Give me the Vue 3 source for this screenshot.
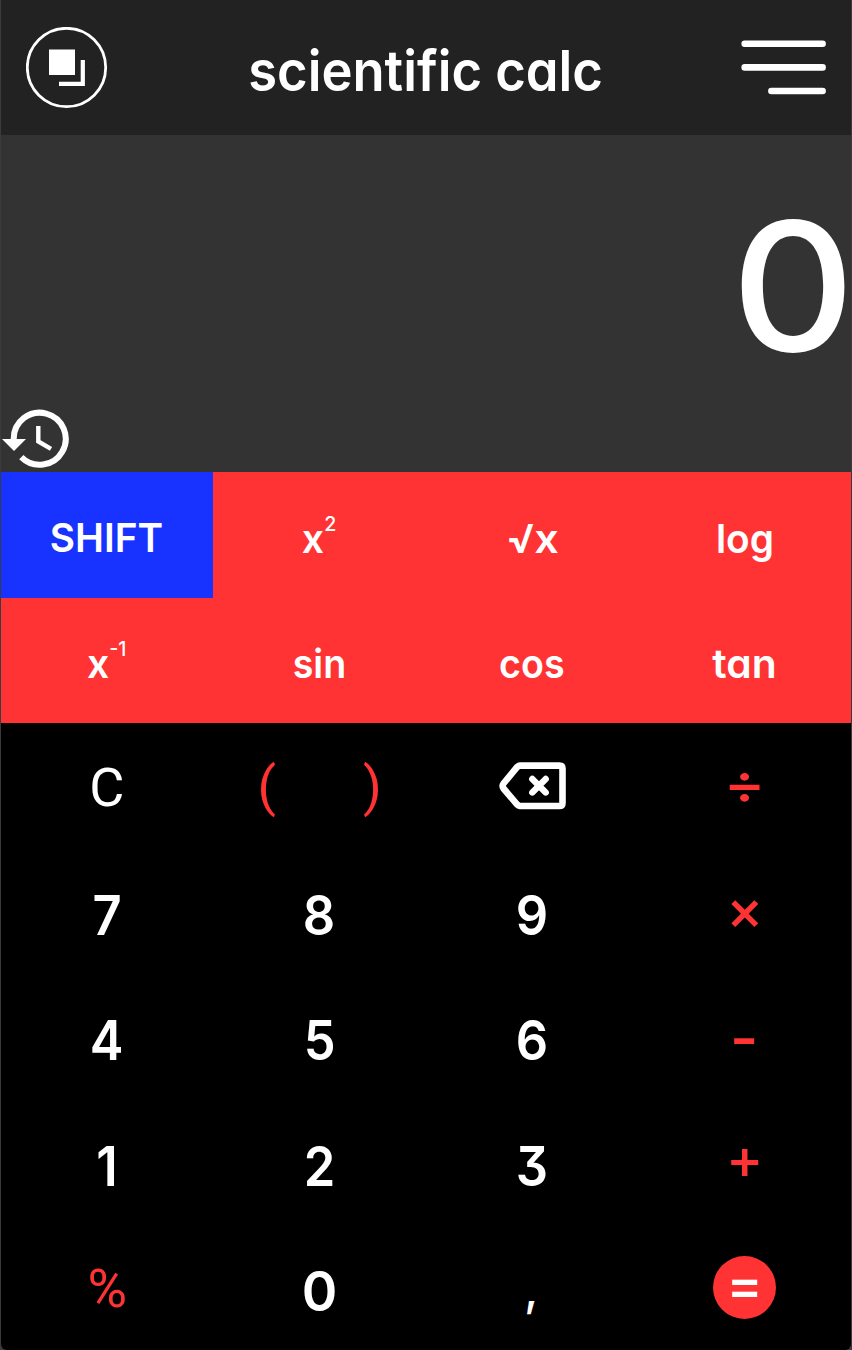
<script setup>
const functions = [
  { id: 'shift', text: 'SHIFT' },
  { id: 'square', text: 'x', sup: '2' },
  { id: 'root', text: '√x' },
  { id: 'log', text: 'log' },
  { id: 'inverse', text: 'x', sup: '-1' },
  { id: 'sin', text: 'sin' },
  { id: 'cos', text: 'cos' },
  { id: 'tan', text: 'tan' },
]

const keys = [
  { id: 'clear', text: 'C' },
  { id: 'parens', pair: ['(', ')'] },
  { id: 'backspace', icon: true },
  { id: 'divide', text: '÷', op: true },
  { id: 'n7', text: '7' },
  { id: 'n8', text: '8' },
  { id: 'n9', text: '9' },
  { id: 'times', text: '×', op: true },
  { id: 'n4', text: '4' },
  { id: 'n5', text: '5' },
  { id: 'n6', text: '6' },
  { id: 'minus', text: '-', op: true },
  { id: 'n1', text: '1' },
  { id: 'n2', text: '2' },
  { id: 'n3', text: '3' },
  { id: 'plus', text: '+', op: true },
  { id: 'percent', text: '%', op: true },
  { id: 'n0', text: '0' },
  { id: 'comma', text: ',' },
  { id: 'equals', text: '=' },
]
</script>

<template>
  <main class="window">
    <div class="calculator">
      <header class="bar">
        <svg class="float-icon" viewBox="0 0 82 82">
          <circle cx="40.5" cy="40.5" r="39.2" fill="none" stroke="#fff" stroke-width="2.8" />
          <rect x="23" y="22.5" width="26" height="25.5" fill="#fff" />
          <path d="M56.8 33V56.8H33" fill="none" stroke="#fff" stroke-width="4.2" />
        </svg>
        <h1 class="title"><span class="title-text">scientific calc</span></h1>
        <svg class="menu-icon" viewBox="0 0 86 56">
          <path d="M3.7 3.7H81.6M3.7 27.4H81.6M30.4 51H81.6" stroke="#fff" stroke-width="6.6" stroke-linecap="round" />
        </svg>
      </header>

      <section class="display">
        <span class="value">0</span>
        <svg class="history" viewBox="0 0 70 60">
          <path d="M12.7 30A26 26 0 1 1 20.3 48.1" fill="none" stroke="#fff" stroke-width="6" />
          <path d="M1 30H25L13 42Z" fill="#fff" />
          <path d="M37.3 17V32.4L50 39.8" fill="none" stroke="#fff" stroke-width="4.4" />
        </svg>
      </section>

      <section class="functions">
        <button v-for="f in functions" :key="f.id" class="fn" :class="f.id">
          <span class="label">{{ f.text }}<sup v-if="f.sup">{{ f.sup }}</sup></span>
        </button>
      </section>

      <section class="keypad">
        <button v-for="k in keys" :key="k.id" class="key" :class="[k.id, { op: k.op }]">
          <svg v-if="k.icon" class="erase" viewBox="0 0 68 48">
            <path d="M21 3.6H60.5Q63.5 3.6 63.5 6.6V41Q63.5 44 60.5 44H21Q19.5 43.8 18 42.3L4.500 26.5Q2.8 24 4.5 21.5L18 5.2Q19.5 3.7 21 3.6Z" fill="none" stroke="#fff" stroke-width="6.6" stroke-linejoin="round" />
            <path d="M33.3 17L46.7 30.4M46.7 17L33.3 30.4" stroke="#fff" stroke-width="6.4" stroke-linecap="round" />
          </svg>
          <template v-else-if="k.pair">
            <span v-for="p in k.pair" :key="p" class="paren">{{ p }}</span>
          </template>
          <span v-else class="label">{{ k.text }}</span>
        </button>
      </section>
    </div>
  </main>
</template>

<style>
body {
  margin: 0;
  background: #3a3b3f;
}
</style>

<style scoped>
.window {
  box-sizing: border-box;
  width: 852px;
  height: 1350px;
  padding: 0 1px;
  background: #3a3b3f;
  overflow: hidden;
}

.calculator {
  height: 1350px;
  display: grid;
  grid-template-rows: 135px 337px 251px 627px;
  background: #000;
  border-radius: 0 0 6px 6px;
  overflow: hidden;
  color: #fff;
  font-family: Inter, Lato, sans-serif;
  font-weight: 600;
  font-feature-settings: "cv11", "cv09";
}

.bar {
  display: grid;
  grid-template-columns: 86px 1fr 86px;
  padding: 0 24px 0 25px;
  background: #222;
}

.float-icon {
  width: 82px;
  height: 82px;
  margin-top: 27px;
}

.title {
  display: flex;
  justify-content: center;
  margin: 0;
  font-size: 56px;
  line-height: 135px;
  font-weight: 600;
  white-space: nowrap;
}

.title-text {
  transform: translate(-0.5px, 4px) scaleX(0.938);
}

.menu-icon {
  width: 86px;
  height: 56px;
  margin-top: 40px;
}

.display {
  display: flex;
  flex-direction: column;
  justify-content: space-between;
  background: #333;
}

.value {
  align-self: flex-end;
  font-size: 179px;
  font-weight: 500;
  line-height: 270px;
  letter-spacing: -4px;
  transform: translateY(16px) scaleX(1.07);
  transform-origin: right;
}

.history {
  width: 70px;
  height: 60px;
  margin-bottom: 3px;
}

.functions {
  display: grid;
  grid-template: repeat(2, 1fr) / 212px 213px 212px 213px;
  background: #f33;
}

.fn,
.key {
  display: flex;
  align-items: center;
  justify-content: center;
  padding: 0;
  border: 0;
  background: none;
  color: inherit;
  font: inherit;
  font-feature-settings: inherit;
}

.fn {
  font-size: 40px;
  line-height: 50px;
}

.fn .label {
  transform: translateY(3.5px) scaleX(0.94);
}

.fn.shift {
  background: #1832ff;
}

.fn.shift .label {
  transform: translate(-1px, 3px) scaleX(0.97);
}

.fn.square .label,
.fn.inverse .label {
  transform: translate(-0.5px, 3.5px) scaleX(0.98);
}

.fn.root .label {
  letter-spacing: -1px;
  transform: translateY(3.5px) scaleX(1.08);
}

.fn.tan .label {
  transform: translateY(3.5px) scaleX(1.02);
}

.fn.log .label {
  transform: translateY(3.5px) scaleX(0.97);
}

.fn sup {
  font-size: 20px;
  font-weight: 500;
  line-height: 0;
  vertical-align: 22px;
}

.label {
  display: inline-block;
  white-space: nowrap;
}

.keypad {
  display: grid;
  grid-template: repeat(5, 1fr) / repeat(4, 1fr);
}

.key {
  font-size: 54.5px;
  line-height: 64px;
}

.key .label {
  transform: translate(-0.5px, 3.5px) scaleX(0.93);
}

.key.n0 .label {
  transform: translate(-0.5px, 3.5px) scaleX(0.99);
}

.key.op {
  color: #f33;
}

.key.clear,
.key.parens,
.key.percent {
  font-family: Roboto, sans-serif;
  font-size: 54px;
  font-weight: 400;
}

.key.clear .label {
  transform: translate(-0.5px, 1.5px);
}

.key.percent .label {
  transform: translateY(2px);
}

.parens {
  gap: 87px;
  color: #f33;
}

.paren {
  transform: translateY(1px);
}

.erase {
  width: 68px;
  height: 48px;
  transform: translateX(1px);
}

.key.divide,
.key.times,
.key.plus {
  font-weight: 500;
}

.key.divide .label {
  transform: translate(-0.5px, -3px) scaleX(1.16);
}

.key.times .label {
  transform: translate(-0.5px, -2px) scale(1.03);
}

.key.minus .label {
  transform: translate(-0.5px, 1.5px) scaleX(1.12);
}

.key.plus .label {
  transform: translate(-0.5px, -3.5px) scale(1.03);
}

.key.comma {
  font-size: 46px;
  font-weight: 500;
}

.key.comma .label {
  transform: translate(-1px, 2px);
}

.key.equals {
  font-weight: 500;
}

.key.equals .label {
  width: 63px;
  height: 63px;
  line-height: 56px;
  border-radius: 50%;
  background: #f33;
  transform: none;
}
</style>
